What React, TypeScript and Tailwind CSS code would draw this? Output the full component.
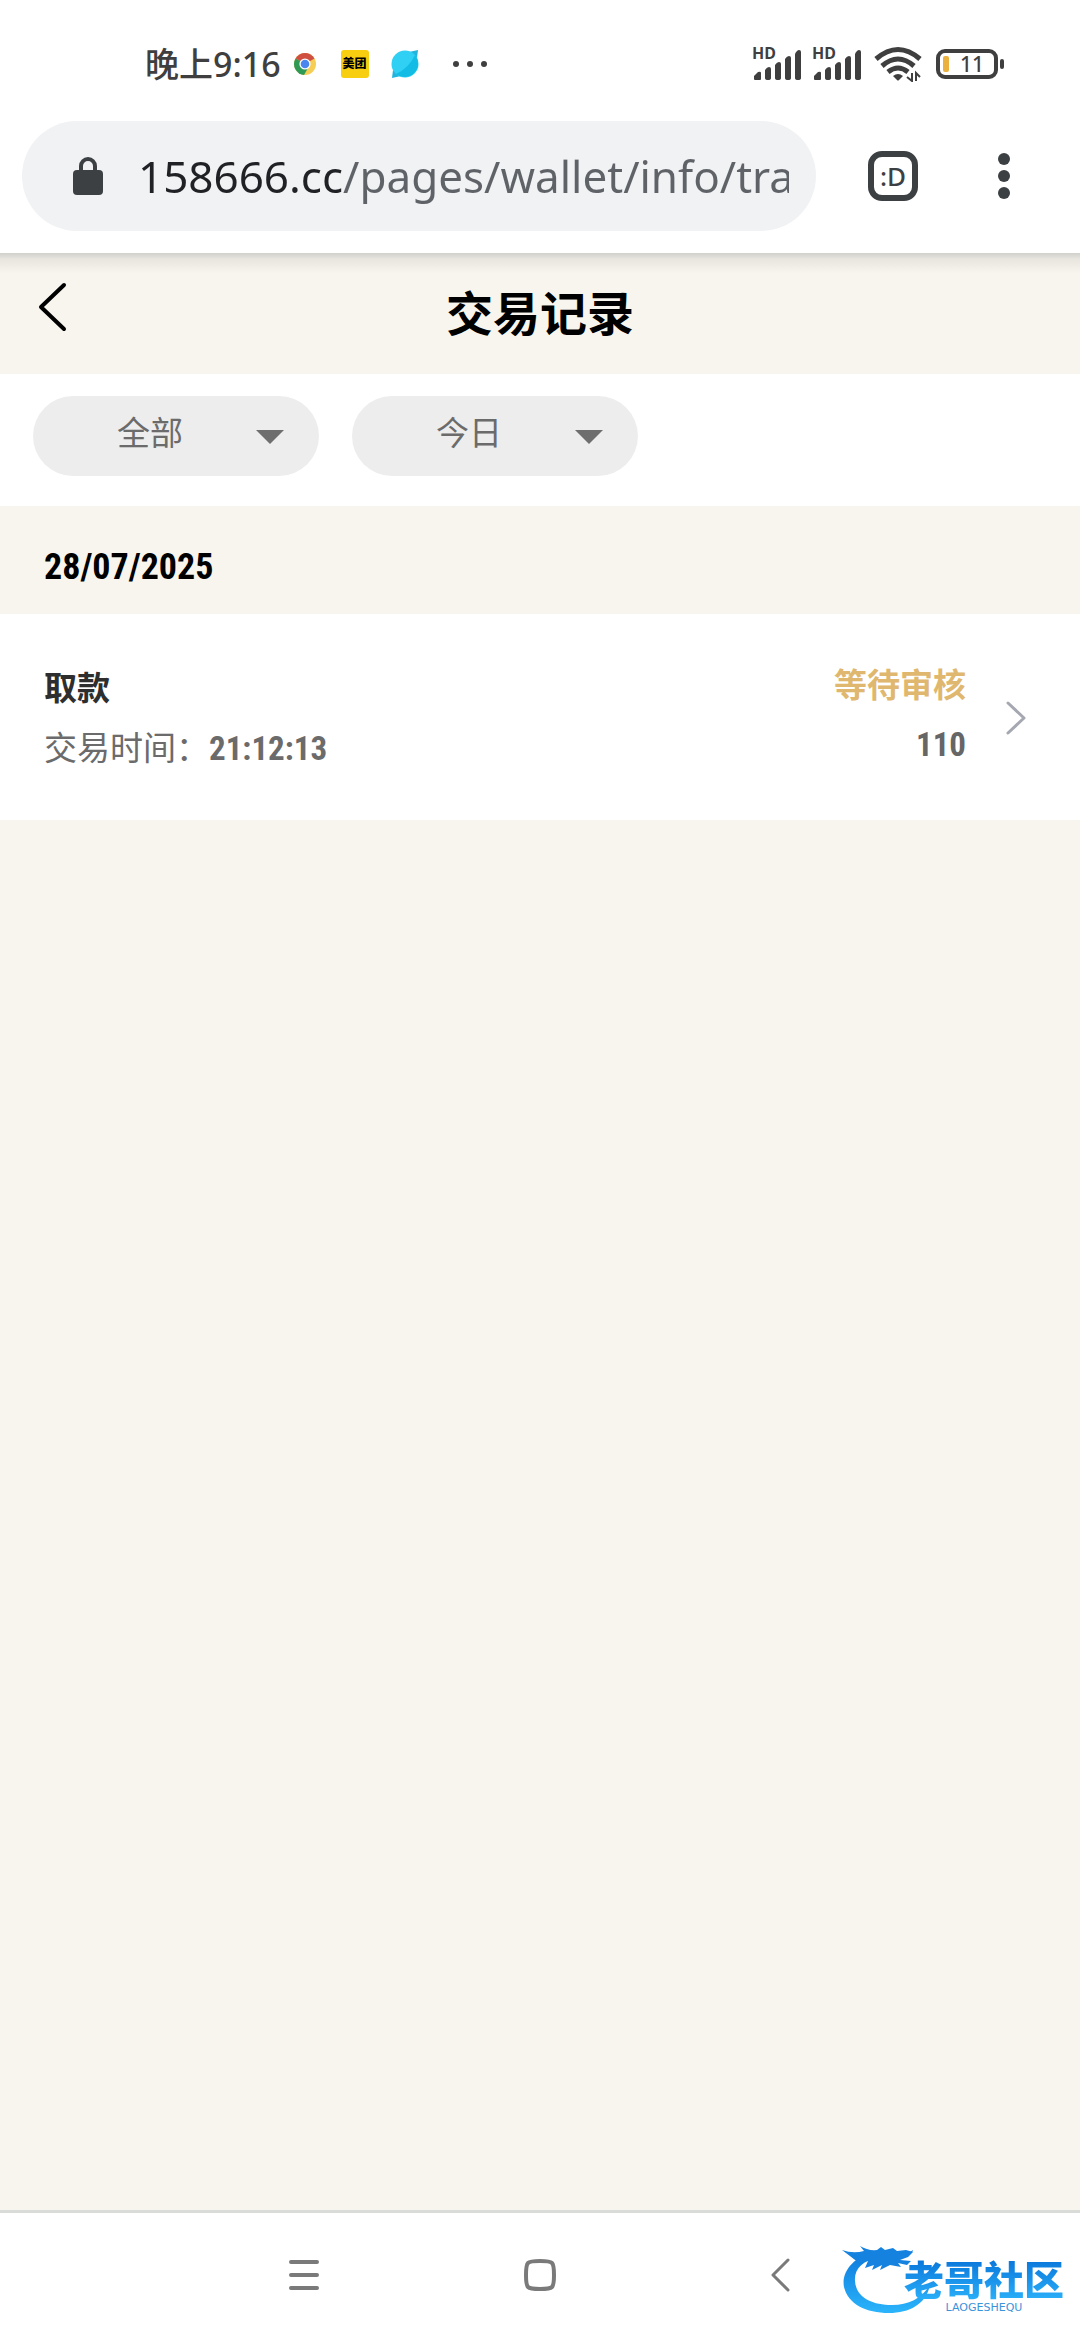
import { useState } from "react";

function SignalBars() {
  return (
    <div className="relative h-9 w-[50px]">
      <span className="absolute -top-[2px] left-0 text-[16px] leading-[18px] font-bold">
        HD
      </span>
      <svg viewBox="0 0 50 36" className="h-full w-full" fill="currentColor">
        <path d="M2 33v-3l4-4q3-1 3 1v6q0 1-1 1H3q-1 0-1-1z" />
        <path d="M13 32V24q2-3 4-3t2 2v9q0 2-3 2t-3-2z" />
        <path d="M23 32V19q2-3 4-3t2 2v14q0 2-3 2t-3-2z" />
        <path d="M33 32V13q2-3 4-3t2 2v20q0 2-3 2t-3-2z" />
        <path d="M43 32V8q2-4 4-4t2 2v26q0 2-3 2t-3-2z" />
      </svg>
    </div>
  );
}

function StatusBar() {
  return (
    <div className="flex h-[88px] items-center justify-between pt-[40px] pr-[76px] pl-[145px] text-[#3f3f3f]">
      <div className="flex items-center">
        <span className="text-[34px] font-medium">晚上9:16</span>
        <svg viewBox="0 0 24 24" className="ml-3 size-6">
          <circle cx="12" cy="12" r="11" fill="#f6cd55" />
          <path d="M12 12 2.5 6.5A11 11 0 0 1 21.5 6.5z" fill="#cf4f41" />
          <path d="M12 12 2.5 6.5A11 11 0 0 0 11 23l4-7z" fill="#2f9a56" />
          <circle cx="12" cy="12" r="5.6" fill="#fff" />
          <circle cx="12" cy="12" r="4.3" fill="#4a86ee" />
        </svg>
        <span className="ml-6 flex size-7 items-center justify-center rounded-[3px] bg-[#f8ce10] text-[12px] font-black text-black">
          美团
        </span>
        <svg viewBox="0 0 30 30" className="ml-[21px] size-[30px]">
          <path d="M19 3 28 1 27 9zM11 27 2 29 3 21z" fill="#22b4dc" />
          <circle cx="15" cy="15" r="13.5" fill="#2fd0f3" />
          <path d="M25 6A13.5 13.5 0 0 1 6 25Q19 19 25 6z" fill="#12bce4" />
        </svg>
        <svg viewBox="0 0 36 8" className="ml-8 h-2 w-9" fill="currentColor">
          <circle cx="4" cy="4" r="3" />
          <circle cx="18" cy="4" r="3" />
          <circle cx="32" cy="4" r="3" />
        </svg>
      </div>
      <div className="flex items-center">
        <div className="flex gap-[10px]">
          <SignalBars />
          <SignalBars />
        </div>
        <svg viewBox="0 0 48 36" className="ml-3 h-9 w-12">
          <g fill="none" stroke="currentColor" strokeWidth="5">
            <path d="M2 13Q24-6 46 13" />
            <path d="M8 20Q24 6 40 20" />
            <path d="M14 26Q24 18 34 26" />
          </g>
          <path d="M19 30q5-4 10 0l-4 4q-1 1-2 0z" fill="currentColor" />
          <path
            d="M38 27v8l-5-4M42 35v-8l4 4"
            fill="none"
            stroke="currentColor"
            strokeWidth="2"
          />
        </svg>
        <div className="ml-[14px] flex h-[30px] w-[62px] items-center rounded-[9px] border-4 border-[#3f3f3f] pl-[3px]">
          <span className="h-4 w-[6px] rounded-[2px] bg-[#eab040]" />
          <span className="ml-[11px] text-[21px] leading-none font-medium">11</span>
        </div>
        <span className="ml-[2px] h-[10px] w-1 rounded-[2px] bg-[#3f3f3f]" />
      </div>
    </div>
  );
}

function BrowserBar() {
  return (
    <div className="flex items-center bg-white pt-[33px] pr-[60px] pb-[22px] pl-[22px]">
      <div className="flex h-[110px] flex-1 items-center rounded-full bg-[#f1f2f4] pr-[27px] pl-[51px]">
        <svg viewBox="0 0 30 40" className="h-10 w-[30px] shrink-0">
          <path d="M8 16V10a7 7 0 0 1 14 0v6" fill="none" stroke="#3c4043" strokeWidth="4" />
          <rect y="14" width="30" height="25" rx="4" fill="#3c4043" />
        </svg>
        <input
          type="text"
          aria-label="网址"
          defaultValue="158666.cc/pages/wallet/info/transaction"
          className="ml-[35px] h-16 w-0 flex-1 bg-[linear-gradient(90deg,#202124_203px,#5f6368_203px)] bg-clip-text text-[44px] text-transparent outline-none"
        />
      </div>
      <button
        aria-label="标签页"
        className="ml-[52px] flex size-[50px] items-center justify-center rounded-[14px] border-6 border-[#3c4043] text-[26px] leading-none font-medium text-[#3c4043]"
      >
        :D
      </button>
      <button aria-label="更多" className="ml-[70px] flex w-8 justify-center">
        <svg viewBox="0 0 12 46" className="h-[46px] w-3" fill="#3c4043">
          <circle cx="6" cy="6" r="6" />
          <circle cx="6" cy="23" r="6" />
          <circle cx="6" cy="40" r="6" />
        </svg>
      </button>
    </div>
  );
}

function Filter({ label, options }: { label: string; options: string[] }) {
  const [value, setValue] = useState(options[0]);
  return (
    <div className="relative h-20 w-[286px]">
      <select
        aria-label={label}
        value={value}
        onChange={(e) => setValue(e.target.value)}
        className="h-full w-full appearance-none rounded-full bg-[#ededed] pb-[6px] pl-[84px] text-[33px] text-[#6b6b6b] outline-none"
      >
        {options.map((o) => (
          <option key={o}>{o}</option>
        ))}
      </select>
      <svg
        viewBox="0 0 28 14"
        className="pointer-events-none absolute top-[34px] right-[35px] h-[14px] w-7"
      >
        <path d="M0 0h28L14 14z" fill="#6e6e6e" />
      </svg>
    </div>
  );
}

const records = [{ type: "取款", time: "21:12:13", status: "等待审核", amount: "110" }];

function SiteLogo() {
  return (
    <div className="absolute right-4 bottom-6 h-[74px] w-[222px]">
      <svg viewBox="0 0 222 74" className="absolute inset-0 h-full w-full">
        <defs>
          <linearGradient id="dragon" x1="0" y1="0" x2="0" y2="1">
            <stop offset="0" stopColor="#0b78dc" />
            <stop offset="1" stopColor="#2bb4fb" />
          </linearGradient>
        </defs>
        <path
          d="M34 9C12 14-1 30 2 45c4 17 22 26 45 26 21 0 37-9 41-28-8 13-21 20-38 20-21 0-36-8-37-24C12 26 22 19 34 16z"
          fill="url(#dragon)"
        />
        <path
          d="M0 8q11 4 22 1l-4-5q8 5 17 4l4-3 4 3 8-2 4 3 9-1 7 2-5 5-8 3 11 1-4 4-9-2 3 4-11-2-10 5 2-5-10 5 2-5-9 3 3-7-9 2Q8 14 0 8z"
          fill="#1682df"
        />
        <path d="M56 11q9 2 15-3-1 6-15 6z" fill="#1682df" />
      </svg>
      <div className="absolute top-4 right-0 flex flex-col items-center">
        <span className="bg-linear-to-b from-[#0a74da] to-[#2cb2fa] bg-clip-text text-[40px] leading-[44px] font-black text-transparent">
          老哥社区
        </span>
        <span className="font-['DejaVu_Sans'] text-[11px] leading-[11px] text-[#3a94dc]">
          LAOGESHEQU
        </span>
      </div>
    </div>
  );
}

function NavBar() {
  return (
    <nav className="relative flex h-[130px] items-center justify-center gap-[188px] border-t-3 border-[#d9dbd9] bg-white pb-1">
      <button aria-label="最近任务">
        <svg viewBox="0 0 48 48" className="size-12" stroke="#7a7a7a" strokeWidth="4" strokeLinecap="round">
          <path d="M11 11h26M11 24h26M11 37h26" />
        </svg>
      </button>
      <button aria-label="主屏幕">
        <svg viewBox="0 0 48 48" className="size-12" fill="none" stroke="#7a7a7a" strokeWidth="4">
          <path d="M24 10Q34 10 36 12T38 24 36 36 24 38 12 36 10 24 12 12 24 10z" />
        </svg>
      </button>
      <button aria-label="返回">
        <svg
          viewBox="0 0 48 48"
          className="size-12"
          fill="none"
          stroke="#7a7a7a"
          strokeWidth="3"
          strokeLinecap="round"
          strokeLinejoin="round"
        >
          <path d="M36 9 21 24l15 15" />
        </svg>
      </button>
      <SiteLogo />
    </nav>
  );
}

export default function App() {
  return (
    <div className="flex min-h-screen flex-col bg-white font-['Noto_Sans','Noto_Sans_CJK_SC',sans-serif]">
      <StatusBar />
      <BrowserBar />
      <main className="flex-1 bg-[#f8f5ee]">
        <header className="grid h-[121px] grid-cols-[1fr_auto_1fr] items-center bg-[linear-gradient(#d0d0cb,#e8e5df_6px,#f8f5ee_20px)] px-8">
          <button aria-label="返回" className="pb-[14px]">
            <svg
              viewBox="0 0 40 50"
              className="h-[50px] w-10"
              fill="none"
              stroke="#000"
              strokeWidth="4"
              strokeLinecap="round"
              strokeLinejoin="round"
            >
              <path d="M32 3 9 25l23 22" />
            </svg>
          </button>
          <h1 className="text-[47px] font-bold text-black">交易记录</h1>
        </header>
        <div className="flex gap-[33px] bg-white px-[33px] pt-[22px] pb-[30px]">
          <Filter label="交易类型" options={["全部", "存款", "取款"]} />
          <Filter label="日期" options={["今日", "昨日", "近7日"]} />
        </div>
        <h2 className="flex h-[108px] items-center px-11 pt-[13px] font-['Roboto_Condensed','Liberation_Sans_Narrow','Noto_Sans',sans-serif] text-[36px] font-bold text-black">
          28/07/2025
        </h2>
        <ul>
          {records.map((r) => (
            <li key={r.time} className="flex items-center bg-white pt-[41px] pr-[54px] pb-[39px] pl-11">
              <div className="flex-1">
                <p className="text-[33px] leading-[60px] font-bold text-[#2e2e2e]">{r.type}</p>
                <p className="text-[33px] leading-[60px] text-[#6b6b6b]">
                  交易时间：
                  <span className="font-['Roboto_Condensed','Liberation_Sans_Narrow','Noto_Sans',sans-serif] text-[33px] font-bold">
                    {r.time}
                  </span>
                </p>
              </div>
              <div className="pb-[6px] text-right">
                <p className="text-[33px] leading-[60px] font-bold text-[#e0b76e]">{r.status}</p>
                <p className="font-['Roboto_Condensed','Liberation_Sans_Narrow','Noto_Sans',sans-serif] text-[33px] leading-[60px] font-bold text-[#666]">
                  {r.amount}
                </p>
              </div>
              <svg
                viewBox="0 0 24 36"
                className="ml-9 h-9 w-6"
                fill="none"
                stroke="#a5a8b0"
                strokeWidth="3"
                strokeLinecap="round"
                strokeLinejoin="round"
              >
                <path d="M6 3l16 15L6 33" />
              </svg>
            </li>
          ))}
        </ul>
      </main>
      <NavBar />
    </div>
  );
}
